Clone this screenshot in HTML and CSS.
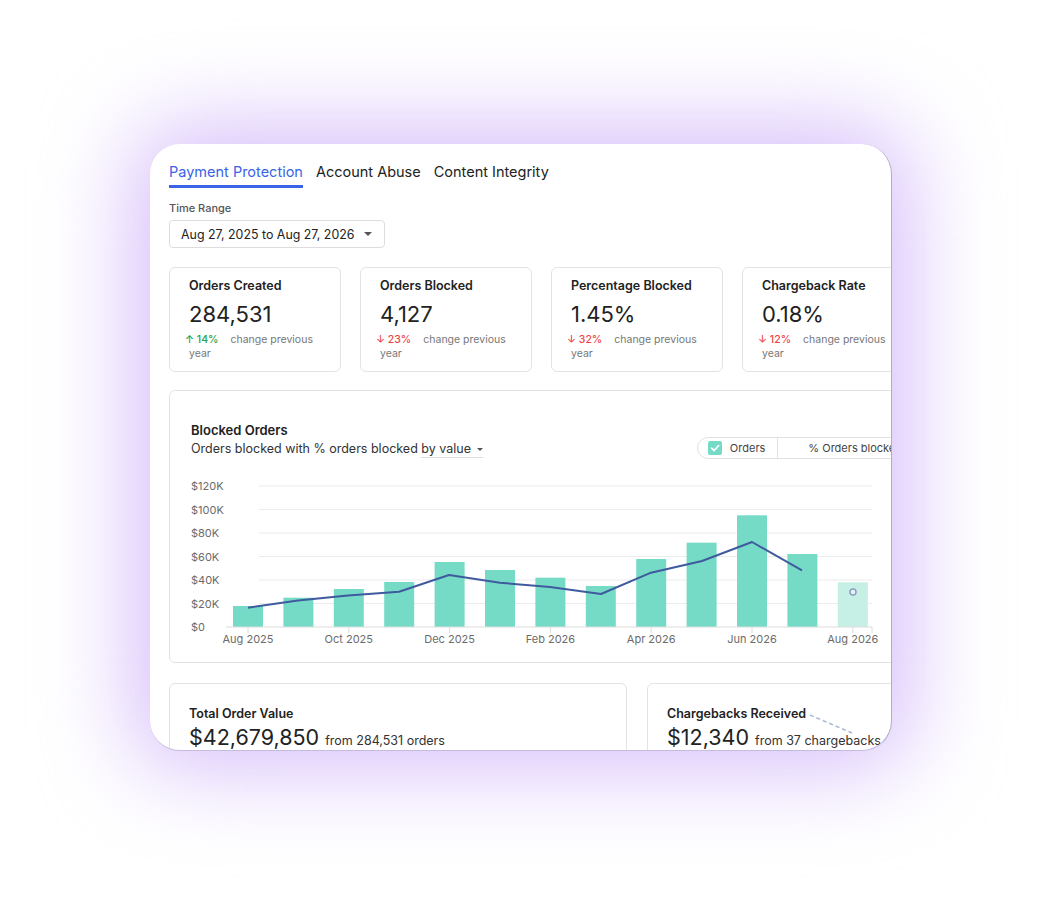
FILE: index.html
```html
<!DOCTYPE html>
<html lang="en">
<head>
  <meta charset="UTF-8" />
  <meta name="viewport" content="width=device-width, initial-scale=1.0"/>
  <title>Fraud Dashboard</title>
  <link rel="stylesheet" href="styles.css">
</head>
<body>
  <div class="stage">
  <div class="frame">
    <div class="content">
      <nav class="tabs">
        <span class="tab active">Payment Protection</span>
        <span class="tab">Account Abuse</span>
        <span class="tab">Content Integrity</span>
      </nav>

      <div class="range-label">Time Range</div>
      <div class="range">
        <span>Aug 27, 2025 to Aug 27, 2026</span>
        <span class="caret"></span>
      </div>

      <div class="stats">
        <div class="stat">
          <div class="stat-title">Orders Created</div>
          <div class="stat-value">284,531</div>
          <div class="stat-change"><span class="up">↑ 14%</span>change previous<br>year</div>
        </div>
        <div class="stat">
          <div class="stat-title">Orders Blocked</div>
          <div class="stat-value">4,127</div>
          <div class="stat-change"><span class="down">↓ 23%</span>change previous<br>year</div>
        </div>
        <div class="stat">
          <div class="stat-title">Percentage Blocked</div>
          <div class="stat-value">1.45%</div>
          <div class="stat-change"><span class="down">↓ 32%</span>change previous<br>year</div>
        </div>
        <div class="stat">
          <div class="stat-title">Chargeback Rate</div>
          <div class="stat-value">0.18%</div>
          <div class="stat-change"><span class="down">↓ 12%</span>change previous<br>year</div>
        </div>
      </div>

      <div class="panel">
        <div class="panel-title">Blocked Orders</div>
        <div class="chart-head">
          <div class="subtitle">Orders blocked with % orders blocked <span class="select">by value <span class="caret small"></span></span></div>
          <div class="legend">
            <span class="legend-item">
              <span class="check">
                <svg width="10" height="10" viewBox="0 0 10 10"><path d="M1.5 5.2 L4 7.6 L8.6 2.6" fill="none" stroke="#fff" stroke-width="1.6" stroke-linecap="round" stroke-linejoin="round"/></svg>
              </span>
              Orders
            </span>
            <span class="legend-item second">% Orders blocked</span>
          </div>
        </div>

        <svg class="chart" width="700" height="175" viewBox="0 0 700 175">
          <g class="grid">
            <line x1="68" y1="10" x2="681" y2="10"/>
            <line x1="68" y1="33.5" x2="681" y2="33.5"/>
            <line x1="68" y1="57" x2="681" y2="57"/>
            <line x1="68" y1="80.5" x2="681" y2="80.5"/>
            <line x1="68" y1="104" x2="681" y2="104"/>
            <line x1="68" y1="127.5" x2="681" y2="127.5"/>
          </g>
          <g class="ylabels">
            <text x="0" y="14">$120K</text>
            <text x="0" y="37.5">$100K</text>
            <text x="0" y="61">$80K</text>
            <text x="0" y="84.5">$60K</text>
            <text x="0" y="108">$40K</text>
            <text x="0" y="131.5">$20K</text>
            <text x="0" y="155">$0</text>
          </g>
          <g class="bars">
            <rect x="42" y="130" width="30" height="21"/>
            <rect x="92.4" y="121.7" width="30" height="29.3"/>
            <rect x="142.8" y="113" width="30" height="38"/>
            <rect x="193.2" y="106" width="30" height="45"/>
            <rect x="243.6" y="86" width="30" height="65"/>
            <rect x="294" y="94" width="30" height="57"/>
            <rect x="344.4" y="101.7" width="30" height="49.3"/>
            <rect x="394.8" y="110" width="30" height="41"/>
            <rect x="445.2" y="83" width="30" height="68"/>
            <rect x="495.6" y="66.7" width="30" height="84.3"/>
            <rect x="546" y="39.3" width="30" height="111.7"/>
            <rect x="596.4" y="78" width="30" height="73"/>
            <rect class="pending" x="646.8" y="106.3" width="30" height="44.7"/>
          </g>
          <line class="axis" x1="35" y1="151" x2="681" y2="151"/>
          <g class="ticks">
            <line x1="57" y1="151" x2="57" y2="157"/>
            <line x1="157.8" y1="151" x2="157.8" y2="157"/>
            <line x1="258.6" y1="151" x2="258.6" y2="157"/>
            <line x1="359.4" y1="151" x2="359.4" y2="157"/>
            <line x1="460.2" y1="151" x2="460.2" y2="157"/>
            <line x1="561" y1="151" x2="561" y2="157"/>
            <line x1="661.8" y1="151" x2="661.8" y2="157"/>
            <line x1="681" y1="151" x2="681" y2="157"/>
          </g>
          <polyline class="trend" points="57,131.7 107,124.5 157,119.5 208,115.7 258,99 309,106.7 359,111 410,118 460,96.7 511,85 561,66 611,94.3"/>
          <circle class="marker" cx="662" cy="116" r="3"/>
          <g class="xlabels">
            <text x="57" y="167">Aug 2025</text>
            <text x="157.8" y="167">Oct 2025</text>
            <text x="258.6" y="167">Dec 2025</text>
            <text x="359.4" y="167">Feb 2026</text>
            <text x="460.2" y="167">Apr 2026</text>
            <text x="561" y="167">Jun 2026</text>
            <text x="661.8" y="167">Aug 2026</text>
          </g>
        </svg>
      </div>

      <div class="totals">
        <div class="total">
          <div class="stat-title">Total Order Value</div>
          <div class="total-value">$42,679,850 <span>from 284,531 orders</span></div>
        </div>
        <div class="total">
          <div class="stat-title">Chargebacks Received</div>
          <div class="total-value">$12,340 <span>from 37 chargebacks</span></div>
          <svg class="spark" width="60" height="30" viewBox="0 0 60 30"><path d="M2 4 L44 22" fill="none" stroke="#a8b6d4" stroke-width="1.5" stroke-dasharray="4 3"/></svg>
        </div>
      </div>
    </div>
  </div>
  </div>
</body>
</html>
```

FILE: styles.css
```css
html, body {
  min-height: 100vh;
}
body {
  margin: 0;
  background: #fff;
  font-family: 'Inter', 'Liberation Sans', sans-serif;
  color: #222;
  overflow: hidden;
}
.stage {
  position: relative;
  width: 742px;
  height: 607px;
  margin: 144px 0 157px 150px;
}
/* soft violet glow behind the card */
.stage::before {
  content: "";
  position: absolute;
  inset: -16px;
  background: #d5bcfa;
  border-radius: 44px;
  filter: blur(46px);
}
.frame {
  position: relative;
  height: 100%;
  background: #fff;
  border-radius: 30px;
  overflow: hidden;
  border-right: 1px solid #b3acc9;
  border-bottom: 1px solid #c4bcdc;
  box-sizing: border-box;
}
.content {
  width: 936px;
  padding: 18px 0 0 19px;
}
.tabs {
  display: flex;
  gap: 13px;
}
.tab {
  font-size: 14.5px;
  line-height: 20px;
  padding-bottom: 3px;
  border-bottom: 3px solid transparent;
}
.tab.active {
  color: #3a63e6;
  border-bottom-color: #3a63e6;
}
.range-label {
  margin-top: 13px;
  font-size: 11px;
  line-height: 14px;
  font-weight: 500;
  color: #555;
}
.range {
  margin-top: 5px;
  display: inline-flex;
  align-items: center;
  gap: 10px;
  height: 28px;
  box-sizing: border-box;
  padding: 0 12px 0 11px;
  border: 1px solid #ddd;
  border-radius: 4px;
  font-size: 12.4px;
}
.caret {
  width: 0;
  height: 0;
  border-left: 4px solid transparent;
  border-right: 4px solid transparent;
  border-top: 4px solid #555;
}
.caret.small {
  display: inline-block;
  border-width: 3px 3px 0;
  vertical-align: middle;
  margin-left: 3px;
}
.stats {
  display: flex;
  gap: 19px;
  margin-top: 19px;
}
.stat {
  width: 172px;
  box-sizing: border-box;
  padding: 10px 19px 10px;
  border: 1px solid #e3e3e3;
  border-radius: 6px;
}
.stat-title {
  font-size: 12.5px;
  line-height: 16px;
  font-weight: 600;
  color: #222;
}
.stat-value {
  margin-top: 6px;
  font-size: 22px;
  line-height: 28px;
}
.stat-change {
  margin-top: 5px;
  font-size: 10.5px;
  line-height: 14px;
  color: #777;
}
.up, .down {
  font-weight: 500;
  margin: 0 12px 0 -4px;
}
.up { color: #22a447; }
.down { color: #ef4444; }
.panel {
  margin-top: 18px;
  padding: 30px 21px 11px;
  border: 1px solid #e3e3e3;
  border-radius: 6px;
}
.panel-title {
  font-size: 13px;
  line-height: 18px;
  font-weight: 600;
}
.chart-head {
  width: 724px;
  height: 18px;
  display: flex;
  justify-content: space-between;
  align-items: flex-start;
}
.subtitle {
  margin-top: 1px;
  font-size: 12.5px;
  line-height: 18px;
  color: #333;
}
.select {
  border-bottom: 1px solid #ddd;
  padding-bottom: 1px;
}
.legend {
  display: flex;
  height: 22px;
  margin-top: -2px;
  box-sizing: border-box;
  border: 1px solid #e2e2e2;
  border-radius: 11px;
  font-size: 11px;
  color: #444;
}
.legend-item {
  display: flex;
  align-items: center;
  gap: 8px;
  padding: 0 12px 0 10px;
}
.legend-item.second {
  border-left: 1px solid #e2e2e2;
  padding-left: 30px;
}
.check {
  width: 14px;
  height: 14px;
  border-radius: 2px;
  background: #76dbc6;
  display: flex;
  align-items: center;
  justify-content: center;
}
.chart {
  display: block;
  margin-top: 19px;
  font-family: 'Inter', 'Liberation Sans', sans-serif;
  font-size: 11px;
}
.grid line { stroke: #ececec; stroke-width: 1; }
.axis { stroke: #dcdcdc; stroke-width: 1; }
.ticks line { stroke: #dcdcdc; stroke-width: 1; }
.ylabels text, .xlabels text { fill: #6b6b6b; }
.xlabels text { text-anchor: middle; }
.bars rect { fill: #76dbc6; }
.bars rect.pending { fill: #c6efe5; }
.trend { fill: none; stroke: #3f5a9e; stroke-width: 2; stroke-linejoin: round; }
.marker { fill: #e8f7f3; stroke: #8c9dc6; stroke-width: 1.5; }
.totals {
  display: flex;
  gap: 20px;
  margin-top: 20px;
}
.total {
  position: relative;
  width: 458px;
  height: 100px;
  box-sizing: border-box;
  padding: 22px 19px 0;
  border: 1px solid #e3e3e3;
  border-radius: 6px;
}
.total-value {
  margin-top: 1px;
  font-size: 21.5px;
  line-height: 28px;
}
.total-value span {
  font-size: 12.5px;
  color: #333;
}
.spark {
  position: absolute;
  left: 160px;
  top: 27px;
}
```
